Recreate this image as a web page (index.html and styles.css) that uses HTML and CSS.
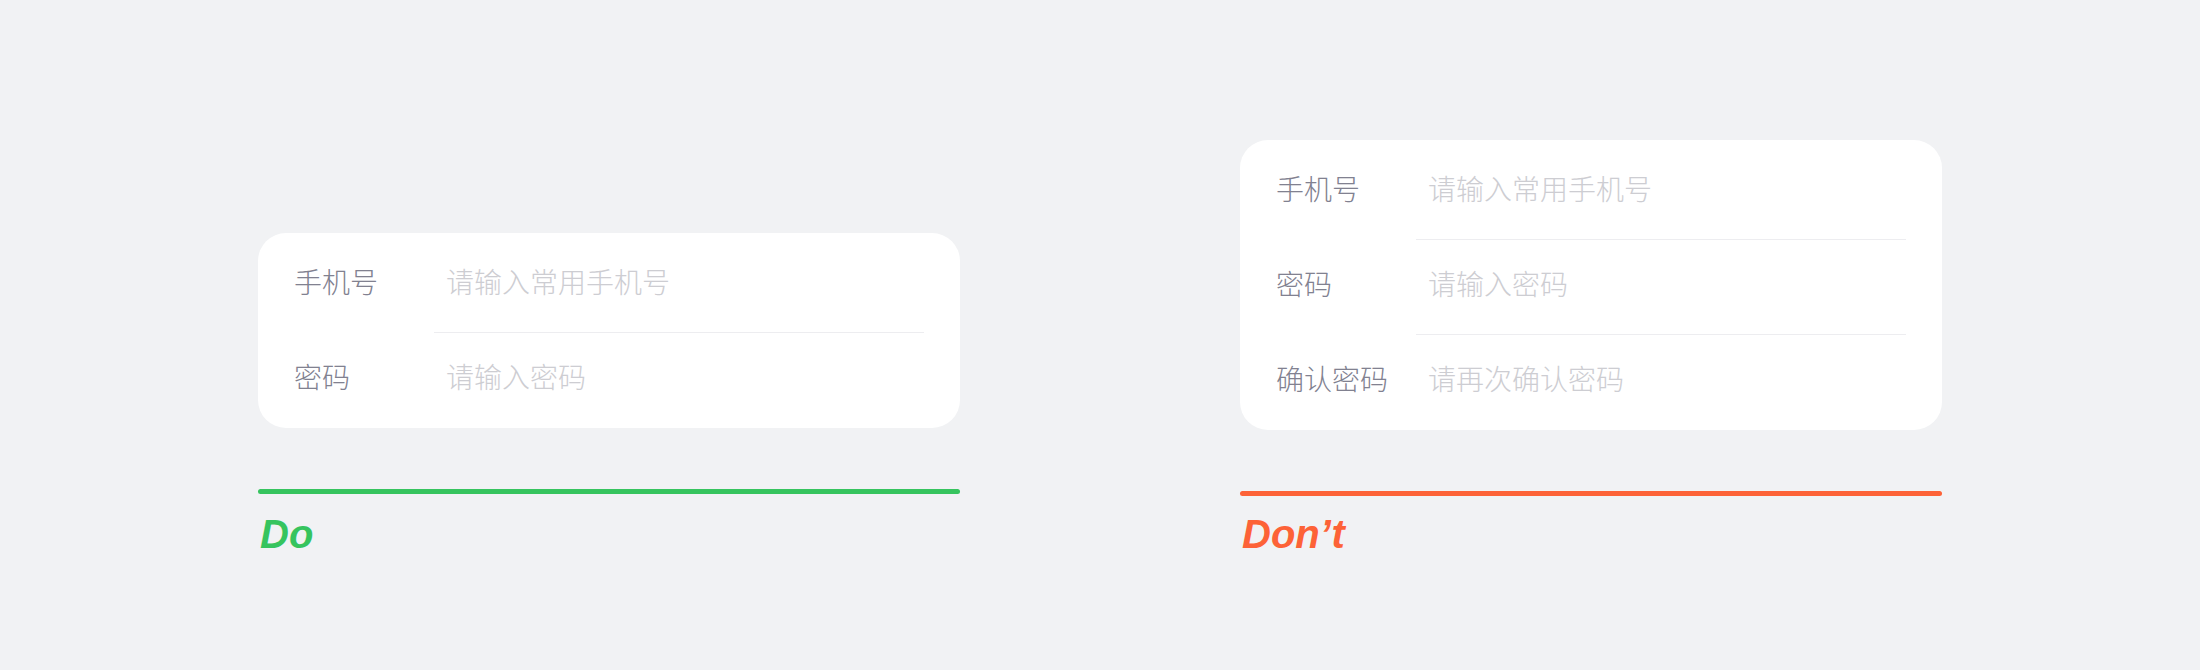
FILE: index.html
```html
<!DOCTYPE html>
<html lang="zh-CN">
<head>
<meta charset="utf-8">
<title>Do / Don't</title>
<link rel="stylesheet" href="styles.css">
</head>
<body>
<main class="page">
  <section class="example">
    <div class="card">
      <div class="row"><span class="label">手机号</span><span class="placeholder">请输入常用手机号</span></div>
      <div class="divider"></div>
      <div class="row"><span class="label">密码</span><span class="placeholder">请输入密码</span></div>
    </div>
    <div class="bar bar-do"></div>
    <div class="verdict verdict-do">Do</div>
  </section>
  <section class="example">
    <div class="card">
      <div class="row"><span class="label">手机号</span><span class="placeholder">请输入常用手机号</span></div>
      <div class="divider"></div>
      <div class="row"><span class="label">密码</span><span class="placeholder">请输入密码</span></div>
      <div class="divider"></div>
      <div class="row"><span class="label">确认密码</span><span class="placeholder">请再次确认密码</span></div>
    </div>
    <div class="bar bar-dont"></div>
    <div class="verdict verdict-dont">Don’t</div>
  </section>
</main>
</body>
</html>
```

FILE: styles.css
```css
html, body {
  margin: 0;
  padding: 0;
}
body {
  background: #f1f2f4;
  width: 2200px;
  height: 670px;
  overflow: hidden;
}
.page {
  box-sizing: border-box;
  height: 670px;
  display: flex;
  justify-content: center;
  align-items: flex-end;
  gap: 280px;
  padding-bottom: 112px;
}
.example {
  width: 702px;
  display: flex;
  flex-direction: column;
}
.card {
  background: #ffffff;
  border-radius: 28px;
  padding: 5px 0 1px;
}
.row {
  box-sizing: border-box;
  height: 94px;
  display: flex;
  align-items: center;
  padding-left: 36px;
  padding-bottom: 8px;
  font-family: "Noto Sans CJK SC", "Noto Sans", sans-serif;
  font-size: 28px;
  font-weight: 300;
  line-height: 1;
}
.label {
  width: 152px;
  flex: none;
  color: #818190;
}
.placeholder {
  color: #cdcdd2;
}
.divider {
  height: 1px;
  background: #ededf0;
  margin-left: 176px;
  margin-right: 36px;
}
.bar {
  height: 5px;
  border-radius: 3px;
  margin-top: 61px;
}
.bar-do { background: #36c45e; }
.bar-dont { background: #fd6237; }
.verdict {
  margin-top: 16px;
  padding-left: 2px;
  font-family: "Liberation Sans", Arial, sans-serif;
  font-weight: bold;
  font-style: italic;
  font-size: 40px;
  line-height: 48px;
}
.verdict-do { color: #36c45e; }
.verdict-dont { color: #fd6237; margin-top: 14px; }
```
